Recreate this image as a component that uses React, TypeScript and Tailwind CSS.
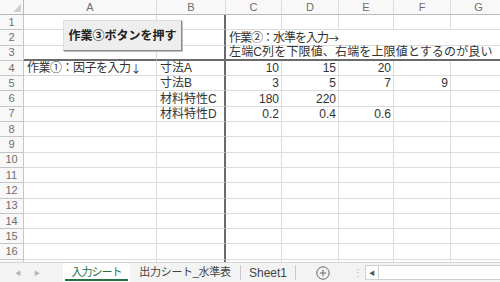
import React from 'react';

type Cell = { text?: React.ReactNode; num?: boolean; span?: number; cls?: string };

const COLS = ['A', 'B', 'C', 'D', 'E', 'F', 'G', 'H'];

const Arrow = ({ c }: { c: string }) => (
  <span className="font-['Noto_Sans_CJK_JP',sans-serif] text-[11px]">{c}</span>
);

const rows: Cell[][] = [
  [{}, {}, {}, {}, {}, {}, {}, {}],
  [{}, {}, { text: <>作業②：水準を入力<Arrow c="→" /></>, span: 6, cls: 'tracking-[-1px]' }],
  [{}, {}, { text: '左端C列を下限値、右端を上限値とするのが良い', span: 6, cls: 'tracking-[0.15px]' }],
  [{ text: <>作業①：因子を入力<Arrow c="↓" /></>, cls: 'tracking-[-0.5px]' }, { text: '寸法A' }, { text: '10', num: true }, { text: '15', num: true }, { text: '20', num: true }, {}, {}, {}],
  [{}, { text: '寸法B' }, { text: '3', num: true }, { text: '5', num: true }, { text: '7', num: true }, { text: '9', num: true }, {}, {}],
  [{}, { text: '材料特性C' }, { text: '180', num: true }, { text: '220', num: true }, {}, {}, {}, {}],
  [{}, { text: '材料特性D' }, { text: '0.2', num: true }, { text: '0.4', num: true }, { text: '0.6', num: true }, {}, {}, {}],
];
for (let i = rows.length; i < 17; i++) rows.push([{}, {}, {}, {}, {}, {}, {}, {}]);

function GridRow({ n, cells }: { n: number; cells: Cell[] }) {
  let col = 0;
  return (
    <>
      <div className="flex items-center justify-center bg-[#f8f8f8] border-r border-b border-[#c6c6c6] text-[11px] text-[#6e6e6e] leading-none">
        {n}
      </div>
      {cells.map((c, i) => {
        const start = col;
        col += c.span ?? 1;
        const isB = start === 1;
        const thickBottom = n === 3;
        return (
          <div
            key={i}
            className={[
              'flex items-end pb-[1px] whitespace-nowrap overflow-visible text-[12px] leading-none text-[#333]',
              c.num ? 'justify-end pr-[2px]' : 'pl-[3px]',
              isB ? 'border-r-2 border-r-[#6a6a6a]' : 'border-r border-r-[#dcdcdc]',
              thickBottom ? 'border-b-2 border-b-[#6a6a6a]' : 'border-b border-b-[#dcdcdc]',
              c.span === 6 ? 'col-span-6' : '',
              c.cls ?? '',
            ].join(' ')}
          >
            {c.text}
          </div>
        );
      })}
    </>
  );
}

export default function App() {
  return (
    <div className="w-[500px] h-[282px] bg-white overflow-hidden flex flex-col font-['Liberation_Sans','Noto_Sans_CJK_JP',sans-serif]">
      <div className="relative h-[262px] overflow-hidden shrink-0">
        <div className="grid grid-cols-[24px_133px_69px_56px_57px_55px_57px_56px_56px] grid-rows-[15px_repeat(17,15.3px)]">
          {/* corner */}
          <div className="relative bg-[#f8f8f8] border-r border-b border-[#b9b9b9]">
            <div className="absolute right-[2px] bottom-[2px] w-0 h-0 border-l-[8px] border-l-transparent border-b-[8px] border-b-[#d0d0d0]" />
          </div>
          {COLS.map((c) => (
            <div
              key={c}
              className="flex items-center justify-center bg-[#f8f8f8] border-r border-r-[#dcdcdc] border-b border-b-[#b9b9b9] text-[11px] text-[#6e6e6e] leading-none"
            >
              {c === 'H' ? '' : c}
            </div>
          ))}
          {rows.map((cells, i) => (
            <GridRow key={i} n={i + 1} cells={cells} />
          ))}
        </div>

        {/* form button */}
        <button className="absolute left-[63px] top-[20px] w-[119px] h-[31px] bg-[#eeeeee] border border-t-[#dedede] border-l-[#dedede] border-r-[#8a8a8a] border-b-[#8a8a8a] shadow-[1px_1px_0_#c0c0c0] text-[12px] font-bold text-[#222] flex items-center justify-center">
          作業③ボタンを押す
        </button>
      </div>

      {/* sheet tabs */}
      <div className="h-[20px] flex items-stretch bg-[#f3f3f3] border-t border-[#d4d4d4] text-[11px] leading-none">
        <div className="w-[63px] flex items-center gap-[13px] pl-[15px] text-[6px] text-[#b5b5b5]">
          <span>◀</span>
          <span>▶</span>
        </div>
        <div className="relative w-[67px] bg-white flex items-center justify-center text-[#217346] tracking-[-1px]">
          入力シート
          <div className="absolute left-[2px] right-[2px] bottom-[1px] h-[2px] bg-[#217346]" />
        </div>
        <div className="w-[111px] flex items-center justify-center text-[#444] border-r border-[#c8c8c8] my-[2px] tracking-[-0.3px]">
          出力シート_水準表
        </div>
        <div className="w-[55px] flex items-center justify-center text-[12px] text-[#444] border-r border-[#c8c8c8] my-[2px]">
          Sheet1
        </div>
        <div className="w-[54px] flex items-center justify-center">
          <svg width="14" height="14" viewBox="0 0 14 14">
            <circle cx="7" cy="7" r="6.2" fill="none" stroke="#666" strokeWidth="1" />
            <path d="M7 3.8v6.4M3.8 7h6.4" stroke="#666" strokeWidth="1" />
          </svg>
        </div>
        <div className="w-[15px] flex items-center justify-center text-[#aaa] text-[10px]">⋮</div>
        <div className="flex-1 flex items-stretch my-[2px] mr-0">
          <div className="w-[14px] bg-white border border-[#d0d0d0] flex items-center justify-center text-[6px] text-[#555]">◀</div>
          <div className="flex-1 bg-white border-y border-[#d0d0d0]" />
        </div>
      </div>
    </div>
  );
}
